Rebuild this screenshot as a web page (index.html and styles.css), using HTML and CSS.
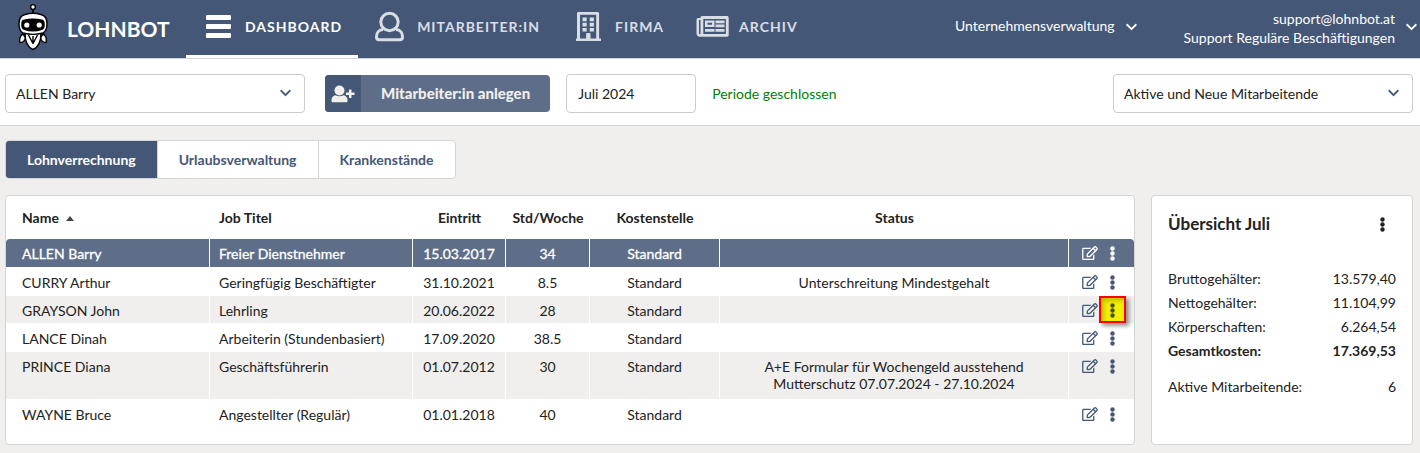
FILE: index.html
```html
<!DOCTYPE html>
<html lang="de">
<head>
    <meta charset="UTF-8">
    <meta name="viewport" content="width=device-width, initial-scale=1.0">
    <title>Lohnbot - Dashboard</title>
    <link rel="stylesheet" href="styles.css">
</head>
<body>
    <!-- Shared icons -->
    <svg class="icon-defs" aria-hidden="true">
        <symbol id="chevron" viewBox="0 0 448 512">
            <path d="M207.029 381.476L12.686 187.132c-9.373-9.373-9.373-24.569 0-33.941l22.667-22.667c9.357-9.357 24.522-9.375 33.901-.04L224 284.505l154.745-154.021c9.379-9.335 24.544-9.317 33.901.04l22.667 22.667c9.373 9.373 9.373 24.569 0 33.941L240.971 381.476c-9.373 9.372-24.569 9.372-33.942 0z"/>
        </symbol>
        <symbol id="edit" viewBox="0 0 576 512">
            <path d="M402.3 344.9l32-32c5-5 13.7-1.5 13.7 5.7V464c0 26.5-21.5 48-48 48H48c-26.5 0-48-21.5-48-48V112c0-26.5 21.5-48 48-48h273.5c7.1 0 10.7 8.6 5.7 13.7l-32 32c-1.5 1.5-3.5 2.3-5.7 2.3H48v352h352V350.5c0-2.1.8-4.1 2.3-5.6zm156.6-201.8L296.3 405.7l-90.4 10c-26.2 2.9-48.5-19.2-45.6-45.6l10-90.4L432.9 17.1c22.9-22.9 59.9-22.9 82.7 0l43.2 43.2c22.9 22.9 22.9 60 .1 82.8zM460.1 174L402 115.9 216.2 301.8l-7.3 65.3 65.3-7.3L460.1 174zm64.8-79.7l-43.2-43.2c-4.1-4.1-10.8-4.1-14.8 0L436 82l58.1 58.1 30.9-30.9c4-4.2 4-10.8-.1-14.9z"/>
        </symbol>
        <symbol id="dots" viewBox="0 0 5 15">
            <circle cx="2.5" cy="2.5" r="2.2"/>
            <circle cx="2.5" cy="7.5" r="2.2"/>
            <circle cx="2.5" cy="12.5" r="2.2"/>
        </symbol>
    </svg>

    <header class="topbar">
        <a class="brand" href="#">
            <svg class="robot" viewBox="0 5 30 48" aria-hidden="true">
                <g stroke="#000" stroke-width="1.4" stroke-linejoin="round">
                    <path d="M15 10v5" stroke-width="2"/>
                    <circle cx="15" cy="8" r="2.4" fill="#fff"/>
                    <path d="M5 35c-2.500 1-4 4.500-3 8.500 3 0 5-2 5.500-5z" fill="#fff"/>
                    <path d="M25 35c2.500 1 4 4.500 3 8.500-3 0-5-2-5.500-5z" fill="#fff"/>
                    <path d="M7 34c0 8 3 14.500 8 16.500 5-2 8-8.500 8-16.500z" fill="#fff"/>
                    <path d="M10.500 36l4.500 8.500 4.500-8.500M15 37v7" fill="none"/>
                    <path d="M7 15.500c5-1.500 11-1.500 16 0 4 1 6 4 6 9s-1 8-4 9.500c-6 1.600-14 1.600-20 0-3-1.500-4-4.500-4-9.500s2-8 6-9z" fill="#fff"/>
                </g>
                <path d="M6 20.500c6-1.500 12-1.500 18 0 2 .5 2.800 2 2.800 5s-.8 5-2.800 5.500c-6 2-12 2-18 0-2-.5-2.800-2.500-2.800-5.500s.8-4.500 2.800-5z" fill="#000"/>
                <circle cx="8.800" cy="26" r="2.600" fill="#fff"/>
                <circle cx="21.200" cy="26" r="2.600" fill="#fff"/>
            </svg>
            <span>LOHNBOT</span>
        </a>
        <nav class="main-nav">
            <a class="nav-item active" href="#">
                <svg viewBox="0 0 33 33" aria-hidden="true">
                    <rect x="4" y="5" width="25" height="5" rx="1"/>
                    <rect x="4" y="14" width="25" height="5" rx="1"/>
                    <rect x="4" y="23" width="25" height="5" rx="1"/>
                </svg>
                <span>DASHBOARD</span>
            </a>
            <a class="nav-item" href="#">
                <svg viewBox="0 0 33 33" aria-hidden="true">
                    <g fill="none" stroke="currentColor" stroke-width="3">
                        <circle cx="15.500" cy="12" r="8.700"/>
                        <path d="M9 19.500C5 19.800 2.500 22.800 2.500 26.500V27c0 1.600 1.200 2.800 2.800 2.800h20.400c1.600 0 2.800-1.200 2.800-2.800v-.5c0-3.700-2.500-6.700-6.500-7"/>
                    </g>
                </svg>
                <span>MITARBEITER:IN</span>
            </a>
            <a class="nav-item" href="#">
                <svg viewBox="0 0 33 33" aria-hidden="true">
                    <path fill-rule="evenodd" d="M6.500 2h19c1 0 1.600.6 1.600 1.600V28.500H29v2.500H4v-2.500h1V3.600C5 2.600 5.500 2 6.500 2zM8 4.800v23.700h6.100v-4.700c0-.5.300-.8.800-.8h2.800c.5 0 .8.300.8.800v4.700h5.700V4.800z"/>
                    <path d="M10.500 7.500h4.200v3.700h-4.200zM17.700 7.500h4.200v3.700h-4.200zM10.500 12.700h4.200v3.700h-4.200zM17.700 12.700h4.200v3.700h-4.200zM10.500 17.900h4.200v3.700h-4.200zM17.700 17.900h4.200v3.700h-4.200z"/>
                </svg>
                <span>FIRMA</span>
            </a>
            <a class="nav-item" href="#">
                <svg viewBox="0 0 33 33" aria-hidden="true">
                    <path fill-rule="evenodd" d="M6 6h25c1 0 1.700.7 1.700 1.700v17.400c0 1-.7 1.700-1.700 1.700H3.700C1.900 26.800.5 25.400.5 23.600V9.800c0-1 .7-1.800 1.700-1.800h2.300C4.500 6.800 5 6 6 6zM3 10v13.500c0 .5.300.8.700.8s.8-.3.8-.8V10zM7.300 9v15h22.600V9z"/>
                    <path fill-rule="evenodd" d="M9 10.500h9.500v6.500H9zm2.500 2.200v2h4.500v-2zM19.500 10.500h9v2.700h-9zM19.500 14.600h9v2.700h-9zM9 19h9.500v2.800H9zM19.500 19h9v2.800h-9z"/>
                </svg>
                <span>ARCHIV</span>
            </a>
        </nav>
        <div class="account">
            <button class="account-btn account-company" type="button">
                <span>Unternehmensverwaltung</span>
                <svg class="chevron"><use href="#chevron"/></svg>
            </button>
            <button class="account-btn account-user" type="button">
                <span>support@lohnbot.at<br>Support Reguläre Beschäftigungen</span>
                <svg class="chevron"><use href="#chevron"/></svg>
            </button>
        </div>
    </header>

    <div class="toolbar">
        <div class="select-wrap">
            <select aria-label="Mitarbeiter:in">
                <option>ALLEN Barry</option>
                <option>CURRY Arthur</option>
                <option>GRAYSON John</option>
                <option>LANCE Dinah</option>
                <option>PRINCE Diana</option>
                <option>WAYNE Bruce</option>
            </select>
            <svg class="chevron"><use href="#chevron"/></svg>
        </div>
        <button class="btn-add" type="button">
            <span class="btn-icon">
                <svg viewBox="0 0 24 18" aria-hidden="true">
                    <circle cx="8.500" cy="5.500" r="5"/>
                    <path d="M4.500 10.200c2.600 1.500 5.400 1.500 8 0 2.500.5 4 2.300 4 4.800V16c0 .8-.6 1.300-1.300 1.300H1.800C1.100 17.300.5 16.800.5 16v-1c0-2.500 1.500-4.300 4-4.800zM18 4.500h2.500v3h3V10h-3v3H18v-3h-3V7.500h3z"/>
                </svg>
            </span>
            <span class="btn-text">Mitarbeiter:in anlegen</span>
        </button>
        <input class="period" type="text" value="Juli 2024" aria-label="Periode">
        <span class="period-state">Periode geschlossen</span>
        <div class="select-wrap filter">
            <select aria-label="Filter">
                <option>Aktive und Neue Mitarbeitende</option>
            </select>
            <svg class="chevron"><use href="#chevron"/></svg>
        </div>
    </div>

    <main>
        <div class="tabs">
            <button class="tab active" type="button">Lohnverrechnung</button>
            <button class="tab" type="button">Urlaubsverwaltung</button>
            <button class="tab" type="button">Krankenstände</button>
        </div>

        <div class="content">
            <section class="card list-card">
                <table class="employees">
                    <colgroup>
                        <col class="col-name">
                        <col class="col-job">
                        <col class="col-entry">
                        <col class="col-hours">
                        <col class="col-cost">
                        <col>
                        <col class="col-actions">
                    </colgroup>
                    <thead>
                        <tr>
                            <th class="left">Name <span class="sort-up"></span></th>
                            <th class="left">Job Titel</th>
                            <th>Eintritt</th>
                            <th>Std/Woche</th>
                            <th>Kostenstelle</th>
                            <th>Status</th>
                            <th></th>
                        </tr>
                    </thead>
                    <tbody>
                        <tr class="selected">
                            <td class="left">ALLEN Barry</td>
                            <td class="left">Freier Dienstnehmer</td>
                            <td>15.03.2017</td>
                            <td>34</td>
                            <td>Standard</td>
                            <td></td>
                            <td class="actions">
                                <div>
                                    <button class="edit" type="button" aria-label="Bearbeiten"><svg><use href="#edit"/></svg></button>
                                    <button class="menu" type="button" aria-label="Menü"><svg><use href="#dots"/></svg></button>
                                </div>
                            </td>
                        </tr>
                        <tr>
                            <td class="left">CURRY Arthur</td>
                            <td class="left">Geringfügig Beschäftigter</td>
                            <td>31.10.2021</td>
                            <td>8.5</td>
                            <td>Standard</td>
                            <td>Unterschreitung Mindestgehalt</td>
                            <td class="actions">
                                <div>
                                    <button class="edit" type="button" aria-label="Bearbeiten"><svg><use href="#edit"/></svg></button>
                                    <button class="menu" type="button" aria-label="Menü"><svg><use href="#dots"/></svg></button>
                                </div>
                            </td>
                        </tr>
                        <tr class="striped">
                            <td class="left">GRAYSON John</td>
                            <td class="left">Lehrling</td>
                            <td>20.06.2022</td>
                            <td>28</td>
                            <td>Standard</td>
                            <td></td>
                            <td class="actions">
                                <div>
                                    <button class="edit" type="button" aria-label="Bearbeiten"><svg><use href="#edit"/></svg></button>
                                    <button class="menu marked" type="button" aria-label="Menü"><svg><use href="#dots"/></svg></button>
                                </div>
                            </td>
                        </tr>
                        <tr>
                            <td class="left">LANCE Dinah</td>
                            <td class="left">Arbeiterin (Stundenbasiert)</td>
                            <td>17.09.2020</td>
                            <td>38.5</td>
                            <td>Standard</td>
                            <td></td>
                            <td class="actions">
                                <div>
                                    <button class="edit" type="button" aria-label="Bearbeiten"><svg><use href="#edit"/></svg></button>
                                    <button class="menu" type="button" aria-label="Menü"><svg><use href="#dots"/></svg></button>
                                </div>
                            </td>
                        </tr>
                        <tr class="striped tall">
                            <td class="left">PRINCE Diana</td>
                            <td class="left">Geschäftsführerin</td>
                            <td>01.07.2012</td>
                            <td>30</td>
                            <td>Standard</td>
                            <td>A+E Formular für Wochengeld ausstehend<br>Mutterschutz 07.07.2024 - 27.10.2024</td>
                            <td class="actions">
                                <div>
                                    <button class="edit" type="button" aria-label="Bearbeiten"><svg><use href="#edit"/></svg></button>
                                    <button class="menu" type="button" aria-label="Menü"><svg><use href="#dots"/></svg></button>
                                </div>
                            </td>
                        </tr>
                        <tr>
                            <td class="left">WAYNE Bruce</td>
                            <td class="left">Angestellter (Regulär)</td>
                            <td>01.01.2018</td>
                            <td>40</td>
                            <td>Standard</td>
                            <td></td>
                            <td class="actions">
                                <div>
                                    <button class="edit" type="button" aria-label="Bearbeiten"><svg><use href="#edit"/></svg></button>
                                    <button class="menu" type="button" aria-label="Menü"><svg><use href="#dots"/></svg></button>
                                </div>
                            </td>
                        </tr>
                    </tbody>
                </table>
            </section>

            <aside class="card overview">
                <div class="overview-head">
                    <h2>Übersicht Juli</h2>
                    <button class="menu" type="button" aria-label="Menü"><svg><use href="#dots"/></svg></button>
                </div>
                <dl>
                    <div><dt>Bruttogehälter:</dt><dd>13.579,40</dd></div>
                    <div><dt>Nettogehälter:</dt><dd>11.104,99</dd></div>
                    <div><dt>Körperschaften:</dt><dd>6.264,54</dd></div>
                    <div class="total"><dt>Gesamtkosten:</dt><dd>17.369,53</dd></div>
                    <div class="count"><dt>Aktive Mitarbeitende:</dt><dd>6</dd></div>
                </dl>
            </aside>
        </div>
    </main>
</body>
</html>
```

FILE: styles.css
```css
* {
    box-sizing: border-box;
}

body {
    margin: 0;
    background-color: #f0efed;
    font-family: Lato, "Liberation Sans", sans-serif;
    font-size: 14px;
    line-height: 17px;
    color: #222;
}

button,
input,
select {
    font: inherit;
    color: inherit;
}

button {
    margin: 0;
    padding: 0;
    border: none;
    background: none;
    cursor: pointer;
}

svg {
    display: block;
    fill: currentColor;
}

.icon-defs {
    display: none;
}

/* Top bar */
.topbar {
    display: flex;
    height: 59px;
    background-color: #455777;
    border-bottom: 1px solid #d4d4d5;
    color: #fff;
}

.brand {
    display: flex;
    align-items: center;
    gap: 19px;
    width: 186px;
    padding: 0 0 2px 18px;
    color: #fff;
    font-size: 21px;
    font-weight: bold;
    text-decoration: none;
}

.robot {
    width: 30px;
    height: 48px;
    overflow: visible;
}

.main-nav {
    display: flex;
}

.nav-item {
    display: flex;
    align-items: center;
    gap: 10px;
    padding: 0 16px 2px;
    border-bottom: 3px solid transparent;
    color: #d9dde4;
    font-weight: bold;
    letter-spacing: 1px;
    text-decoration: none;
}

.nav-item svg {
    width: 33px;
    height: 33px;
}

.nav-item.active {
    color: #fff;
    border-bottom-color: #fff;
}

.account {
    display: flex;
    align-items: center;
    gap: 47px;
    margin-left: auto;
    padding: 0 3px 4px 0;
}

.account-btn {
    display: flex;
    align-items: center;
    gap: 11px;
    line-height: 19px;
    text-align: right;
}

.account-company span {
    padding-bottom: 4px;
}

.account-user span {
    padding-top: 2px;
}

.chevron {
    width: 11px;
    height: 14px;
}

/* Toolbar */
.toolbar {
    display: flex;
    align-items: center;
    padding: 15px 7px 12px 5px;
    background-color: #fff;
    border-bottom: 1px solid #d4d4d5;
}

.select-wrap {
    position: relative;
    width: 300px;
}

.select-wrap select {
    width: 100%;
    height: 39px;
    padding: 0 32px 0 10px;
    border: 1px solid #ccc;
    border-radius: 4px;
    background-color: #fff;
    appearance: none;
}

/* Arrow drawn over the select */
.select-wrap .chevron {
    position: absolute;
    top: 12px;
    right: 14px;
    color: #455777;
    pointer-events: none;
}

.filter {
    margin-left: auto;
}

.btn-add {
    display: flex;
    height: 37px;
    margin: 0 16px 0 20px;
    border-radius: 4px;
    overflow: hidden;
    background-color: #5e6e88;
    color: #f0efed;
    font-size: 15px;
    font-weight: 900;
}

.btn-icon {
    display: flex;
    align-items: center;
    justify-content: center;
    width: 36px;
    height: 37px;
    background-color: #455777;
}

.btn-icon svg {
    width: 24px;
    height: 18px;
}

.btn-text {
    padding: 0 20px;
    line-height: 37px;
}

.period {
    width: 130px;
    height: 39px;
    padding: 0 11px;
    border: 1px solid #ccc;
    border-radius: 4px;
}

.period-state {
    margin-left: 16px;
    color: #008000;
}

/* Tabs */
main {
    padding: 14px 7px 8px 5px;
}

.tabs {
    display: inline-flex;
    border: 1px solid #d4d4d5;
    border-radius: 4px;
    background-color: #fff;
    overflow: hidden;
}

.tab {
    height: 37px;
    padding: 0 21px;
    border-right: 1px solid #d4d4d5;
    color: #455777;
    font-weight: bold;
}

.tab:last-child {
    border-right: none;
}

.tab.active {
    background-color: #455777;
    color: #fff;
}

/* Cards */
.content {
    display: flex;
    gap: 16px;
    margin-top: 16px;
}

.card {
    background-color: #fff;
    border: 1px solid #d4d4d5;
    border-radius: 4px;
}

.list-card {
    flex: 1;
    padding-bottom: 16px;
}

.employees {
    width: 100%;
    border-collapse: separate;
    border-spacing: 0;
    table-layout: fixed;
}

.col-name { width: 204px; }
.col-job { width: 203px; }
.col-entry { width: 93px; }
.col-hours { width: 84px; }
.col-cost { width: 130px; }
.col-actions { width: 65px; }

.employees th {
    height: 43px;
    padding: 0;
    font-weight: bold;
    white-space: nowrap;
}

.employees td {
    height: 28px;
    padding: 6px 0 0;
    border-right: 1px solid #fff;
    border-bottom: 1px solid #fff;
    text-align: center;
    vertical-align: top;
}

.employees .left {
    padding-left: 9px;
    text-align: left;
}

.employees .left:first-child {
    padding-left: 16px;
}

.employees td:last-child {
    border-right: none;
}

.sort-up {
    display: inline-block;
    margin-left: 4px;
    border: 4px solid transparent;
    border-top: none;
    border-bottom: 5px solid #444;
    vertical-align: 2px;
}

.selected td {
    height: 29px;
    background-color: #5e6e88;
    color: #fff;
    -webkit-text-stroke: 0.3px #fff;
}

.selected td:first-child {
    border-top-left-radius: 4px;
}

.selected td:last-child {
    border-top-right-radius: 4px;
}

.striped td {
    background-color: #f0efed;
}

.tall td {
    height: 48px;
}

.employees td.actions {
    padding: 0 0 0 13px;
    color: #455777;
}

.employees .selected td.actions {
    color: #fff;
}

.actions div {
    display: flex;
    gap: 1px;
}

.edit svg {
    width: 16px;
    height: 14px;
}

.menu {
    display: flex;
    align-items: center;
    justify-content: center;
    width: 27px;
    height: 27px;
    padding-top: 2px;
}

.menu svg {
    width: 5px;
    height: 15px;
}

/* Highlighted row menu */
.menu.marked {
    border: 2px solid #f00;
    background-color: #f2f000;
    box-shadow: 3px 3px 4px rgba(0, 0, 0, 0.4), inset 3px 3px 4px rgba(0, 0, 0, 0.2);
    color: #45520a;
}

/* Overview */
.overview {
    width: 262px;
    min-height: 250px;
    padding: 14px 16px;
}

.overview-head {
    display: flex;
    align-items: center;
    justify-content: space-between;
    margin-bottom: 30px;
}

.overview h2 {
    margin: 0;
    font-size: 17px;
    line-height: 24px;
}

.overview dl {
    margin: 0;
}

.overview dl div {
    display: flex;
    justify-content: space-between;
    line-height: 24px;
}

.overview dd {
    margin: 0;
}

.overview .total {
    font-weight: bold;
}

.overview .count {
    margin-top: 12px;
}
```
